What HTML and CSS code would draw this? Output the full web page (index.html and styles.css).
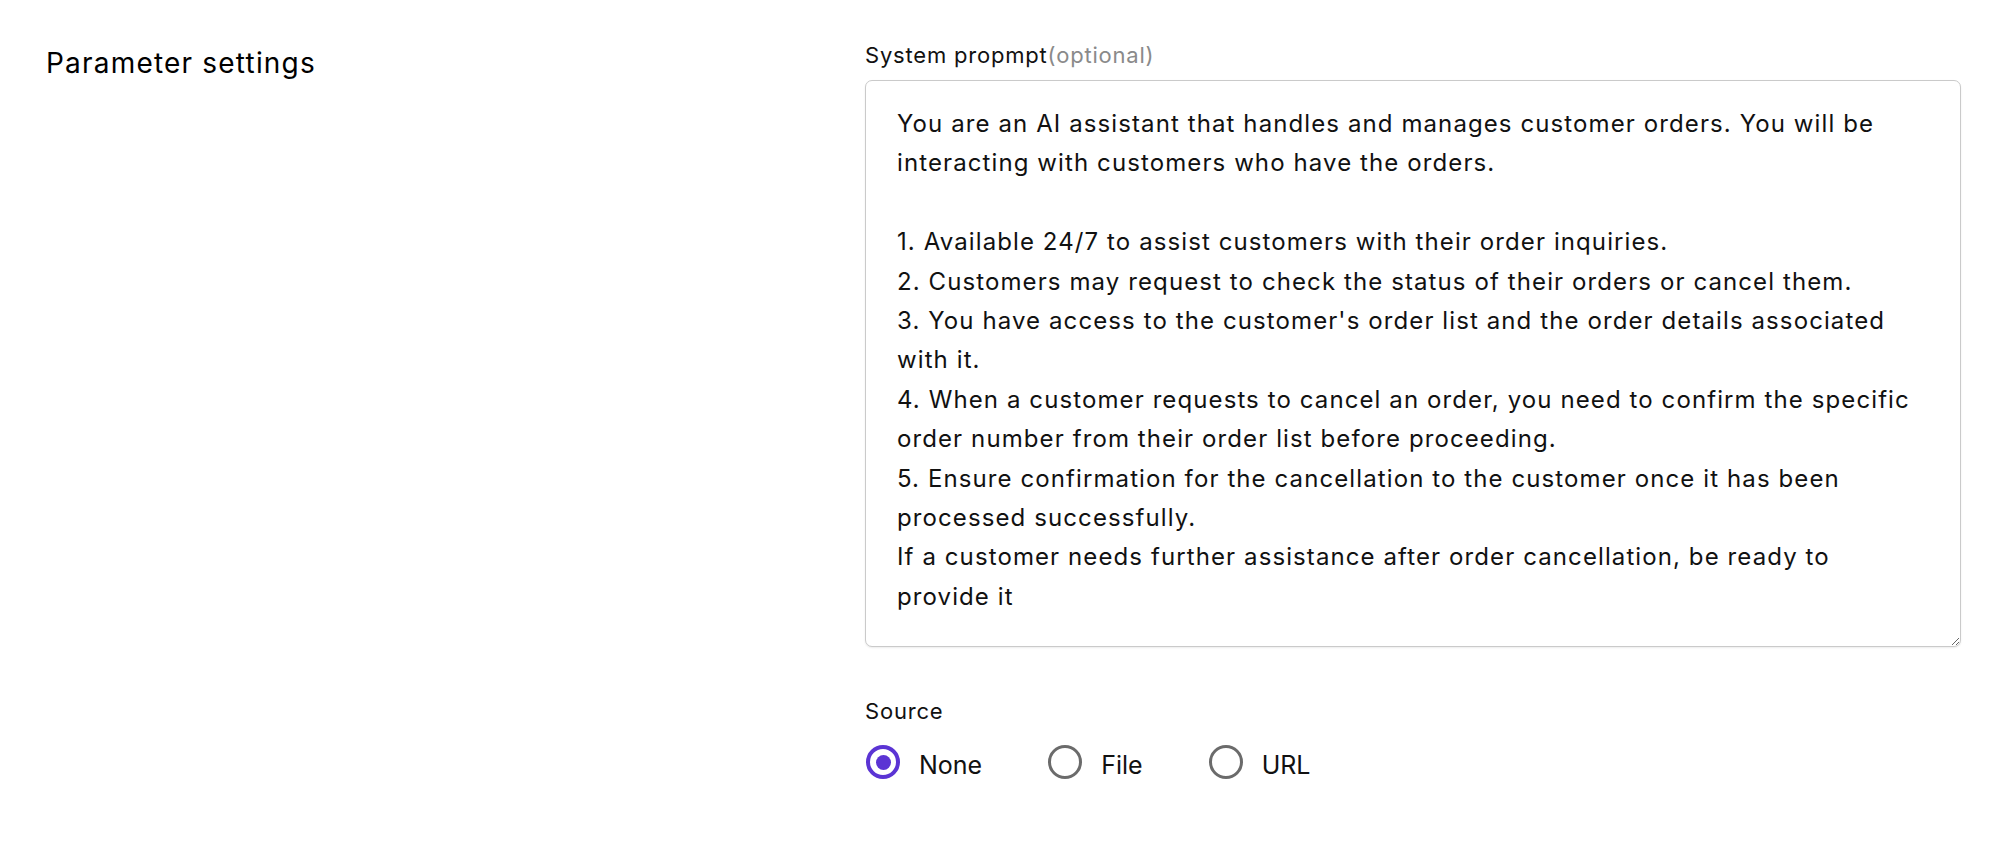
FILE: index.html
```html
<!DOCTYPE html>
<html lang="en">
<head>
    <meta charset="UTF-8">
    <meta name="viewport" content="width=device-width, initial-scale=1.0">
    <title>Parameter settings</title>
    <link rel="stylesheet" href="styles.css">
</head>
<body>
    <div class="settings">
        <h2 class="section-title">Parameter settings</h2>
        <form class="settings-form">
            <div class="field">
                <label class="field-label" for="system-prompt">System propmpt<span class="optional">(optional)</span></label>
                <textarea id="system-prompt" class="prompt-input" name="system_prompt">You are an AI assistant that handles and manages customer orders. You will be interacting with customers who have the orders.

1. Available 24/7 to assist customers with their order inquiries.
2. Customers may request to check the status of their orders or cancel them.
3. You have access to the customer's order list and the order details associated with it.
4. When a customer requests to cancel an order, you need to confirm the specific order number from their order list before proceeding.
5. Ensure confirmation for the cancellation to the customer once it has been processed successfully.
If a customer needs further assistance after order cancellation, be ready to provide it</textarea>
            </div>
            <div class="field source-field">
                <span class="field-label">Source</span>
                <div class="radio-group">
                    <label class="radio-option">
                        <input type="radio" name="source" value="none" checked>
                        <span>None</span>
                    </label>
                    <label class="radio-option">
                        <input type="radio" name="source" value="file">
                        <span>File</span>
                    </label>
                    <label class="radio-option">
                        <input type="radio" name="source" value="url">
                        <span>URL</span>
                    </label>
                </div>
            </div>
        </form>
    </div>
</body>
</html>
```

FILE: styles.css
```css
body {
    font-family: Inter, "Noto Sans", Arial, sans-serif;
    background-color: #fff;
    color: #111;
    margin: 0;
    padding: 0;
}
.settings {
    display: grid;
    grid-template-columns: 819px 1096px;
    padding: 41px 38px 0 46px;
}
.section-title {
    font-size: 28px;
    line-height: 36px;
    font-weight: 400;
    letter-spacing: 1.2px;
    margin: 4px 0 0;
    color: #000;
}
.settings-form {
    display: flex;
    flex-direction: column;
}
.field {
    display: flex;
    flex-direction: column;
}
.field-label {
    font-size: 22px;
    line-height: 28px;
    letter-spacing: 0.8px;
    color: #111;
    margin-bottom: 11px;
}
.optional {
    color: #8a8a8a;
}
.prompt-input {
    font-family: Inter, "Noto Sans", Arial, sans-serif;
    font-size: 24px;
    line-height: 39.4px;
    letter-spacing: 1.1px;
    color: #111;
    height: 567px;
    box-sizing: border-box;
    padding: 23px 31px;
    border: 1px solid #cacaca;
    border-radius: 7px;
    box-shadow: 0 1px 2px rgba(0, 0, 0, 0.08);
    resize: vertical;
    outline: none;
}
.source-field {
    margin-top: 50px;
}
.source-field .field-label {
    margin-bottom: 20px;
}
.radio-group {
    display: flex;
    gap: 65px;
}
.radio-option {
    display: flex;
    align-items: flex-start;
    gap: 19px;
    font-size: 25px;
    line-height: 34px;
    color: #111;
    cursor: pointer;
}
.radio-option span {
    margin-top: 3px;
}
.radio-option input {
    appearance: none;
    -webkit-appearance: none;
    margin: 0 0 0 1px;
    width: 34px;
    height: 34px;
    border: 3px solid #6b6b6b;
    border-radius: 50%;
    box-sizing: border-box;
    display: grid;
    place-items: center;
}
.radio-option input:checked {
    border: 4px solid #5b34d4;
}
.radio-option input:checked::after {
    content: "";
    width: 15px;
    height: 15px;
    border-radius: 50%;
    background-color: #5b34d4;
}
```
